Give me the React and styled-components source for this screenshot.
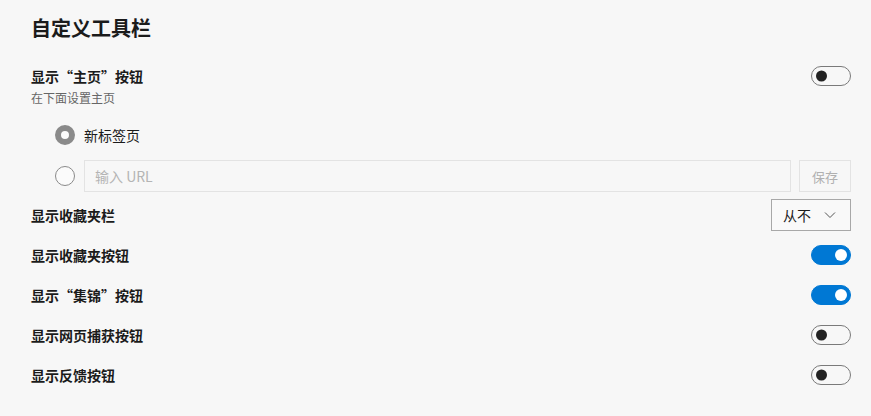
import React from 'react';
import styled, { createGlobalStyle } from 'styled-components';

const Global = createGlobalStyle`
  html, body {
    margin: 0;
    background: #f7f7f7;
  }
  body {
    font-family: "Noto Sans CJK SC", "Noto Sans", sans-serif;
    color: #1b1b1b;
  }
`;

const Page = styled.div`
  padding: 14px 20px 20px 31px;
  display: flex;
  flex-direction: column;
`;

const Title = styled.h1`
  margin: 0 0 24px;
  font-size: 20px;
  line-height: 28px;
  font-weight: 700;
  color: #1b1b1b;
`;

const Row = styled.div`
  display: flex;
  align-items: center;
  justify-content: space-between;
  height: ${p => p.$h || 40}px;
`;

const Label = styled.span`
  font-size: 14px;
  font-weight: 700;
  line-height: 20px;
  color: #1b1b1b;
`;

const Hint = styled.div`
  margin-top: 4px;
  font-size: 12px;
  line-height: 16px;
  color: #666;
`;

const RadioGroup = styled.div`
  display: flex;
  flex-direction: column;
  gap: 9px;
  margin: 13px 0 3px;
  padding-left: 24px;
`;

const RadioRow = styled.div`
  display: flex;
  align-items: center;
  gap: 9px;
  height: 32px;
`;

const Radio = styled.span`
  box-sizing: border-box;
  width: 20px;
  height: 20px;
  flex: none;
  border-radius: 50%;
  border: ${p => (p.$checked ? '6px solid #8a8a8a' : '1px solid #8a8a8a')};
  background: #fbfbfb;
`;

const RadioText = styled.span`
  font-size: 14px;
  color: #1b1b1b;
`;

const UrlInput = styled.div`
  box-sizing: border-box;
  flex: 1;
  height: 32px;
  border: 1px solid #e3e3e3;
  padding: 0 10px;
  display: flex;
  align-items: center;
  font-size: 14px;
  color: #b4b4b4;
`;

const SaveButton = styled.div`
  box-sizing: border-box;
  width: 52px;
  height: 32px;
  margin-left: -1px;
  border: 1px solid #e3e3e3;
  display: flex;
  align-items: center;
  justify-content: center;
  font-size: 13px;
  color: #b0b0b0;
`;

const Select = styled.div`
  box-sizing: border-box;
  width: 80px;
  height: 32px;
  border: 1px solid #a8a8a8;
  background: #f9f9f9;
  display: flex;
  align-items: center;
  justify-content: space-between;
  padding: 0 14px 0 11px;
  font-size: 14px;
  color: #1b1b1b;
`;

const Toggle = styled.span`
  box-sizing: border-box;
  position: relative;
  width: 40px;
  height: 20px;
  border-radius: 10px;
  border: 1px solid ${p => (p.$on ? '#0078d4' : '#7a7a7a')};
  background: ${p => (p.$on ? '#0078d4' : 'transparent')};

  &::after {
    content: '';
    position: absolute;
    top: 50%;
    width: ${p => (p.$on ? 12 : 11)}px;
    height: ${p => (p.$on ? 12 : 11)}px;
    border-radius: 50%;
    background: ${p => (p.$on ? '#fff' : '#222')};
    transform: translateY(-50%);
    ${p => (p.$on ? 'right: 3px;' : 'left: 4px;')}
  }
`;

const Chevron = () => (
  <svg width="12" height="8" viewBox="0 0 12 8">
    <path d="M1 1.5 L6 6.5 L11 1.5" fill="none" stroke="#555" strokeWidth="1" />
  </svg>
);

const toggles = [
  { label: '显示收藏夹按钮', on: true },
  { label: '显示“集锦”按钮', on: true },
  { label: '显示网页捕获按钮', on: false },
  { label: '显示反馈按钮', on: false },
];

export default function App() {
  return (
    <>
      <Global />
      <Page>
        <Title>自定义工具栏</Title>
        <Row $h={20}>
          <Label>显示“主页”按钮</Label>
          <Toggle />
        </Row>
        <Hint>在下面设置主页</Hint>
        <RadioGroup>
          <RadioRow>
            <Radio $checked />
            <RadioText>新标签页</RadioText>
          </RadioRow>
          <RadioRow>
            <Radio />
            <UrlInput>输入 URL</UrlInput>
            <SaveButton>保存</SaveButton>
          </RadioRow>
        </RadioGroup>
        <Row>
          <Label>显示收藏夹栏</Label>
          <Select>
            从不
            <Chevron />
          </Select>
        </Row>
        {toggles.map(t => (
          <Row key={t.label}>
            <Label>{t.label}</Label>
            <Toggle $on={t.on} />
          </Row>
        ))}
      </Page>
    </>
  );
}
